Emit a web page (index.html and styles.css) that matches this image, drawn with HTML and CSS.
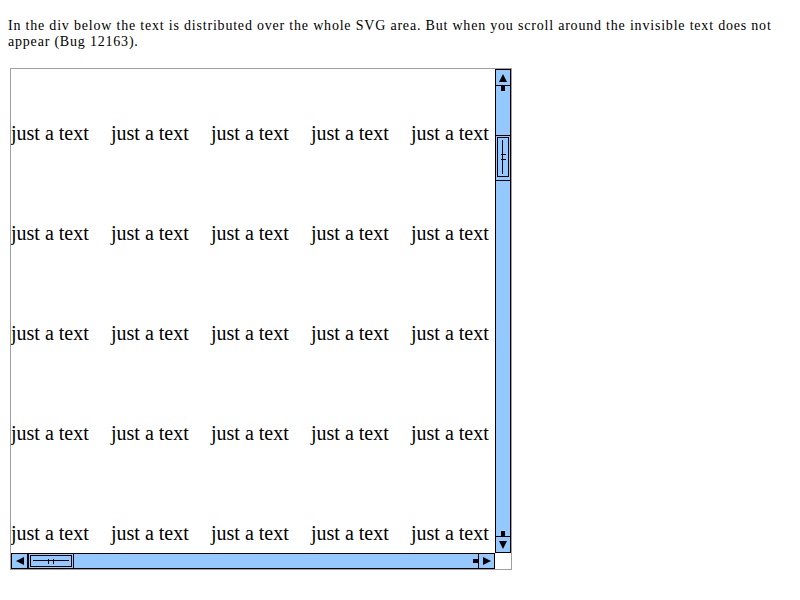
FILE: index.html
```html
<!DOCTYPE html>
<html>
<head>
<meta charset="utf-8">
<link rel="stylesheet" href="styles.css">
</head>
<body>
<p class="intro">In the div below the text is distributed over the whole SVG area. But when you scroll around the invisible text does not appear (Bug 12163).</p>
<div class="frame">
  <div class="view">
    <div class="cells">
      <span>just a text</span><span>just a text</span><span>just a text</span><span>just a text</span><span>just a text</span>
      <span>just a text</span><span>just a text</span><span>just a text</span><span>just a text</span><span>just a text</span>
      <span>just a text</span><span>just a text</span><span>just a text</span><span>just a text</span><span>just a text</span>
      <span>just a text</span><span>just a text</span><span>just a text</span><span>just a text</span><span>just a text</span>
      <span>just a text</span><span>just a text</span><span>just a text</span><span>just a text</span><span>just a text</span>
    </div>
  </div>
  <div class="vbar">
    <div class="vbtn vbtn-up"><span class="tri-up"></span></div>
    <div class="vnub"></div>
    <div class="vthumb"><div class="vthumb-in"><span class="vline"></span><span class="vtick"></span><span class="vtick"></span></div></div>
    <div class="vfill"></div>
    <div class="vnub"></div>
    <div class="vbtn vbtn-down"><span class="tri-down"></span></div>
  </div>
  <div class="hbar">
    <div class="hbtn hbtn-left"><span class="tri-left"></span></div>
    <div class="hthumb"><div class="hthumb-in"><span class="hline"></span><span class="htick"></span><span class="htick"></span></div></div>
    <div class="hfill"></div>
    <div class="hnub"></div>
    <div class="hbtn hbtn-right"><span class="tri-right"></span></div>
  </div>
  <div class="corner"></div>
</div>
</body>
</html>
```

FILE: styles.css
```css
html, body {
  margin: 0;
  padding: 0;
  background: #ffffff;
}
body {
  font-family: "Liberation Serif", "Times New Roman", serif;
  color: #000;
}
.intro {
  margin: 18px 8px 0 8px;
  font-size: 14px;
  line-height: 16px;
  letter-spacing: 0.8px;
}
.frame {
  margin: 18px 0 0 10px;
  width: 500px;
  border: 1px solid #a0a0a0;
  display: grid;
  grid-template-columns: 484px 16px;
  grid-template-rows: 484px 16px;
}
.view {
  overflow: hidden;
  background: #fff;
}
.cells {
  display: grid;
  grid-template-columns: repeat(5, 100px);
  grid-auto-rows: 100px;
  width: 500px;
  padding-top: 54px;
  font-size: 20px;
  line-height: 20px;
  white-space: nowrap;
}
/* vertical scrollbar */
.vbar {
  box-sizing: border-box;
  background: #94c8ff;
  border: 1px solid #000;
  display: flex;
  flex-direction: column;
}
.vbtn {
  height: 15px;
  display: flex;
  align-items: center;
  justify-content: center;
  flex: none;
}
.vbtn-up { border-bottom: 1px solid #000; }
.vbtn-down { border-top: 1px solid #000; }
.tri-up {
  width: 0; height: 0;
  border-left: 4px solid transparent;
  border-right: 4px solid transparent;
  border-bottom: 8px solid #000;
}
.tri-down {
  width: 0; height: 0;
  border-left: 4px solid transparent;
  border-right: 4px solid transparent;
  border-top: 8px solid #000;
}
.vnub {
  width: 4px;
  height: 5px;
  background: #000;
  margin: 0 auto;
  flex: none;
}
.vthumb {
  margin-top: 44px;
  height: 42px;
  border-top: 1px solid #000;
  border-bottom: 1px solid #000;
  padding: 1px;
  flex: none;
}
.vthumb-in {
  position: relative;
  height: 38px;
  border: 1px solid #000;
  display: flex;
  flex-direction: column;
  align-items: center;
  justify-content: center;
}
.vline {
  position: absolute;
  left: 4px;
  top: 2px;
  bottom: 2px;
  width: 1px;
  background: #000;
}
.vtick {
  width: 5px;
  height: 1px;
  background: #000;
  margin: 2px 0;
}
.vfill { flex: 1; }
/* horizontal scrollbar */
.hbar {
  box-sizing: border-box;
  background: #94c8ff;
  border: 1px solid #000;
  display: flex;
}
.hbtn {
  width: 15px;
  display: flex;
  align-items: center;
  justify-content: center;
  flex: none;
}
.hbtn-left { border-right: 1px solid #000; }
.hbtn-right { border-left: 1px solid #000; }
.tri-left {
  width: 0; height: 0;
  border-top: 4px solid transparent;
  border-bottom: 4px solid transparent;
  border-right: 8px solid #000;
}
.tri-right {
  width: 0; height: 0;
  border-top: 4px solid transparent;
  border-bottom: 4px solid transparent;
  border-left: 8px solid #000;
}
.hthumb {
  width: 42px;
  border-left: 1px solid #000;
  border-right: 1px solid #000;
  padding: 1px;
  flex: none;
  display: flex;
}
.hthumb-in {
  position: relative;
  flex: 1;
  border: 1px solid #000;
  display: flex;
  align-items: center;
  justify-content: center;
}
.hline {
  position: absolute;
  top: 4px;
  left: 2px;
  right: 2px;
  height: 1px;
  background: #000;
}
.htick {
  width: 1px;
  height: 5px;
  background: #000;
  margin: 0 2px;
}
.hfill { flex: 1; }
.hnub {
  width: 5px;
  height: 4px;
  background: #000;
  align-self: center;
  flex: none;
}
.corner { background: #fff; }
```
